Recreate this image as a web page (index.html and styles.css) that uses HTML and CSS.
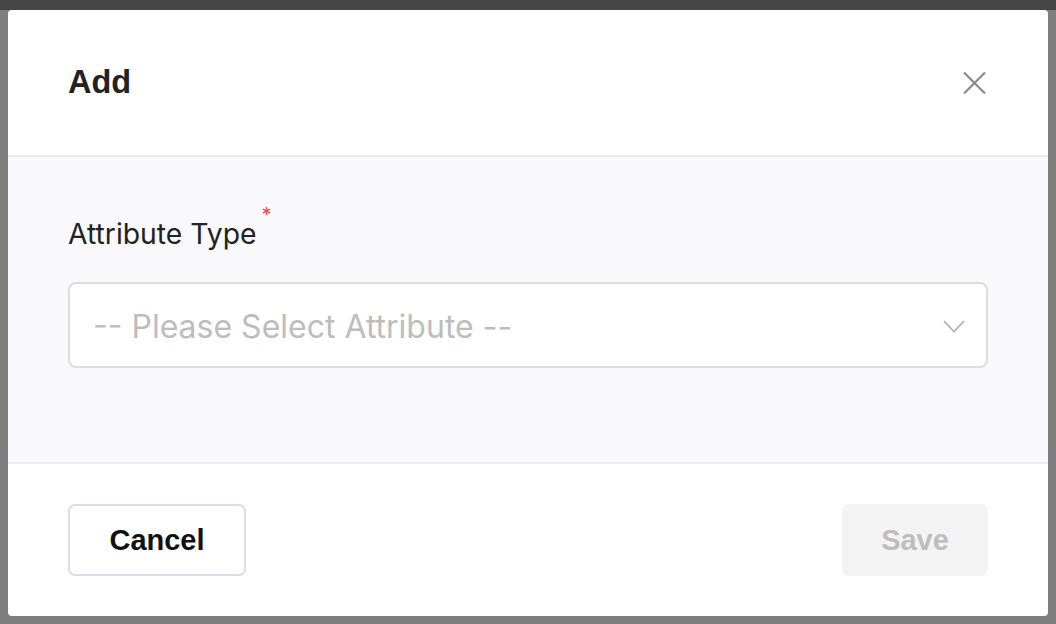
FILE: index.html
```html
<!DOCTYPE html>
<html>
<head>
<meta charset="utf-8">
<link rel="stylesheet" href="styles.css">
</head>
<body>
<div class="modal">
  <div class="modal-header">
    <h2 class="modal-title">Add</h2>
    <button class="close-btn" aria-label="Close">
      <svg width="24" height="24" viewBox="0 0 24 24"><path d="M2 1.5 L23 22.5 M23 1.5 L2 22.5" stroke="#8a8a8a" stroke-width="2.2" fill="none"/></svg>
    </button>
  </div>
  <div class="modal-body">
    <label class="field-label">Attribute Type<span class="req">*</span></label>
    <div class="select">
      <span class="placeholder">-- Please Select Attribute --</span>
      <svg class="chevron" width="22" height="13" viewBox="0 0 22 13"><path d="M1 1 L11 11.5 L21 1" stroke="#b0b0b0" stroke-width="1.8" fill="none"/></svg>
    </div>
  </div>
  <div class="modal-footer">
    <button class="btn btn-cancel">Cancel</button>
    <button class="btn btn-save">Save</button>
  </div>
</div>
</body>
</html>
```
FILE: styles.css
```css
html, body {
  margin: 0;
  padding: 0;
}
body {
  width: 1056px;
  height: 624px;
  background: linear-gradient(#474747 0, #474747 10px, #7f7f7f 10px);
  padding: 10px 8px 8px 8px;
  box-sizing: border-box;
  font-family: Inter, "Liberation Sans", sans-serif;
}
.modal {
  width: 1040px;
  height: 606px;
  background: #fff;
  border-radius: 4px;
  display: flex;
  flex-direction: column;
  overflow: hidden;
}
.modal-header {
  height: 145px;
  flex: none;
  border-bottom: 2px solid #ececec;
  display: flex;
  align-items: center;
  justify-content: space-between;
  padding: 0 62px 0 60px;
}
.modal-title {
  margin: 0;
  font-family: "Liberation Sans", Arial, sans-serif;
  font-weight: 700;
  font-size: 32.5px;
  color: #222;
}
.close-btn {
  border: 0;
  background: none;
  padding: 0;
  width: 24px;
  height: 24px;
  display: flex;
}
.modal-body {
  height: 307px;
  flex: none;
  box-sizing: border-box;
  background: #f9f9fb;
  border-bottom: 2px solid #ececec;
  padding: 59px 60px 0 60px;
  display: flex;
  flex-direction: column;
}
.field-label {
  font-size: 28.3px;
  color: #222;
  line-height: 36px;
  position: relative;
  align-self: flex-start;
}
.req {
  color: #f04848;
  font-size: 20px;
  position: absolute;
  right: -15px;
  top: -19px;
}
.select {
  margin-top: 30px;
  height: 86px;
  flex: none;
  box-sizing: border-box;
  border: 2px solid #dcdcdc;
  border-radius: 8px;
  background: #fff;
  display: flex;
  align-items: center;
  justify-content: space-between;
  padding: 2px 21px 0 23px;
}
.placeholder {
  font-size: 32px;
  color: #bdbdbd;
}
.modal-footer {
  flex: 1;
  display: flex;
  align-items: flex-start;
  justify-content: space-between;
  padding: 40px 60px 0 60px;
}
.btn {
  font-family: "Liberation Sans", Arial, sans-serif;
  font-weight: 700;
  font-size: 29px;
  height: 72px;
  border-radius: 7px;
}
.btn-cancel {
  width: 178px;
  background: #fff;
  border: 2px solid #dcdce6;
  color: #111;
}
.btn-save {
  width: 146px;
  background: #f3f3f3;
  border: 0;
  color: #bdbdbd;
}
```
